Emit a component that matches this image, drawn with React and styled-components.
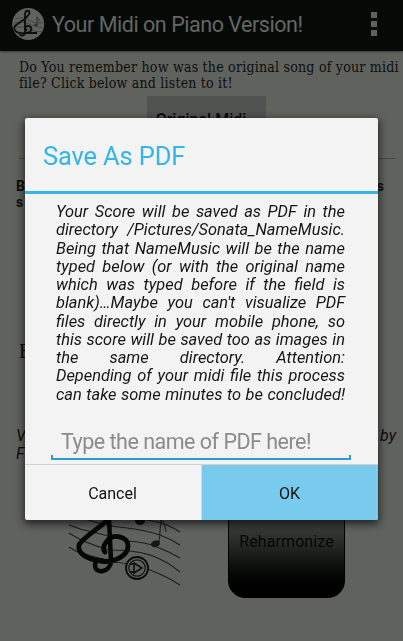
import React from "react";
import styled, { createGlobalStyle } from "styled-components";

const colors = {
	bar: "#060a07",
	page: "#60625e",
	dialog: "#f3f3f3",
	blue: "#33b5e5",
	field: "#2f9dcb",
	pressed: "#78cbec",
};

const GlobalStyle = createGlobalStyle`
	* {
		box-sizing: border-box;
	}

	body {
		margin: 0;
		overflow: hidden;
		font-family: Roboto, sans-serif;
		background: ${colors.page};
	}
`;

const Screen = styled.div`
	width: 403px;
	height: 641px;
	overflow: hidden;
	background: ${colors.page};
`;

const ActionBar = styled.header`
	display: flex;
	align-items: center;
	height: 51px;
	padding: 0 26px 3px 12px;
	background: ${colors.bar};
	box-shadow: 0 1px 2px rgba(0, 0, 0, 0.4);
`;

const BarTitle = styled.h1`
	flex: 1;
	margin: 2px 0 0 7px;
	font-size: 21.5px;
	font-weight: 400;
	line-height: 26px;
	letter-spacing: -0.46px;
	white-space: nowrap;
	color: #646664;
`;

const Overflow = styled.div`
	display: grid;
	gap: 3px;
`;

const Dot = styled.i`
	width: 6px;
	height: 6px;
	background: #60625f;
`;

const Content = styled.main`
	display: flex;
	flex-direction: column;
	color: #0c0e0c;
`;

const Intro = styled.p`
	margin: 8px 0 0 19px;
	width: 384px;
	height: 32px;
	font-family: "DejaVu Serif Condensed", "DejaVu Serif", serif;
	font-stretch: condensed;
	font-size: 14px;
	line-height: 16px;
	white-space: nowrap;
`;

const IntroLine = styled.span`
	display: block;
	letter-spacing: ${({ $spacing }) => $spacing};
`;

const MidiButton = styled.button`
	width: 119px;
	height: 46px;
	margin: 5px 0 0 147px;
	padding: 0;
	border: 0;
	font: 500 16px/48px Roboto, sans-serif;
	letter-spacing: 0;
	text-indent: -11px;
	color: #090b09;
	background: #515350;
`;

const Rule = styled.hr`
	width: 376px;
	height: 1px;
	margin: 16px 0 0 19px;
	border: 0;
	background: #484a47;
`;

const Row = styled.div`
	display: flex;
	justify-content: space-between;
	width: ${({ $width }) => $width};
	margin: ${({ $margin }) => $margin};
`;

const BoldText = styled(Row)`
	font-size: 14px;
	font-weight: 700;
	line-height: 16px;
`;

const SerifText = styled(Row)`
	font-family: "Liberation Serif", serif;
	font-size: 20px;
	line-height: 24px;
`;

const ItalicText = styled(Row)`
	font-size: 16px;
	font-style: italic;
	line-height: 18px;
`;

const Features = styled.section`
	display: flex;
	justify-content: space-between;
	width: 277px;
	margin: 37px 0 0 68px;
`;

const Reharmonize = styled.button`
	width: 117px;
	height: 98px;
	padding: 0 0 14px;
	border: 1px solid #000;
	border-radius: 0 0 17px 17px;
	font: 400 16px/20px Roboto, sans-serif;
	letter-spacing: 0.1px;
	color: #050705;
	background: linear-gradient(#454744 0%, #363836 30%, #060806 75%, #000 90%);
`;

const Dialog = styled.section`
	position: fixed;
	left: 24.5px;
	top: 118px;
	display: flex;
	flex-direction: column;
	width: 353px;
	height: 402px;
	border-radius: 2px;
	overflow: hidden;
	background: ${colors.dialog};
	box-shadow: 0 3px 9px 1px rgba(0, 0, 0, 0.65);
`;

const DialogTitle = styled.h2`
	height: 76px;
	margin: 0;
	padding-left: 18.5px;
	border-bottom: 3px solid ${colors.blue};
	font-size: 25.5px;
	font-weight: 400;
	line-height: 76px;
	letter-spacing: -0.15px;
	color: ${colors.blue};
`;

const Message = styled.div`
	width: 289px;
	margin: 9px 0 0 31.5px;
	font-size: 16.4px;
	font-style: italic;
	line-height: 18.25px;
	color: #161616;
`;

const MessageLine = styled.div`
	text-align: justify;
	text-align-last: justify;
	white-space: nowrap;
`;

const NameField = styled.input`
	width: 300px;
	height: 36px;
	margin: 20px 0 4px 26.5px;
	padding: 4px 0 2px 8px;
	border: solid ${colors.field};
	border-width: 0 2px 2px;
	border-image: linear-gradient(transparent 31px, ${colors.field} 31px) 2;
	outline: 0;
	border-radius: 0;
	font: 400 21.5px/26px Roboto, sans-serif;
	letter-spacing: -0.5px;
	background: transparent;

	&::placeholder {
		color: #8b8b8b;
		opacity: 1;
	}
`;

const Actions = styled.footer`
	display: grid;
	grid-template-columns: 177px 176px;
	height: 56px;
	margin-top: auto;
	border-top: 1px solid #d2d2d2;
`;

const ActionButton = styled.button`
	padding: 3px 0 0;
	border: 0;
	border-right: ${({ $pressed }) => ($pressed ? "0" : "1px solid #d2dde2")};
	font: 400 16px/20px Roboto, sans-serif;
	color: #111;
	background: ${({ $pressed }) => ($pressed ? colors.pressed : "transparent")};
`;

const message = [
	"Your Score will be saved as PDF in the",
	"directory /Pictures/Sonata_NameMusic.",
	"Being that NameMusic will be the name",
	"typed below (or with the original name",
	"which was typed before if the field is",
	"blank)...Maybe you can't visualize PDF",
	"files directly in your mobile phone, so",
	"this score will be saved too as images in",
	"the same directory. Attention:",
	"Depending of your midi file this process",
	"can take some minutes to be concluded!",
];

const Logo = () => (
	<svg width="33" height="34" viewBox="0 0 33 34" fill="none">
		<circle cx="16.2" cy="17" r="16" fill="#60625f" />
		<g stroke="#3d403d" strokeWidth="0.8">
			<path d="M3 12q8-3 14 1t14 3M2 16q9-2 15 1t14 4M2 20q9-1 15 2t13 3" />
		</g>
		<path
			d="M13 19V8c0-6 6-5 4-1-2 5-10 8-14 12-3 5 3 8 10 7 8 0 8-7 3-7-4 0-4 4-1 4M13 17v9c-1 4-6 3-5 0M13 26h12"
			stroke="#0b0e0b"
			strokeWidth="1.8"
		/>
		<path d="M25 18v-8l3 4" stroke="#303330" strokeWidth="1" />
		<ellipse cx="24" cy="18" rx="1.8" ry="1.3" fill="#303330" />
	</svg>
);

const Score = () => (
	<svg width="116" height="98" viewBox="0 0 116 98" fill="none">
		<g stroke="#1b1e1b" strokeWidth="1.1">
			<path d="M1 47Q8 52 16 54T45 62Q62 63 82 70 98 76 112 85" />
			<path d="M1 33Q18 44 42 50 66 50 82 55 99 61 112 72" />
			<path d="M1 25Q13 30 25 32L59 41Q78 42 89 47 102 52 112 58" />
			<path d="M17 19Q38 26 59 28 77 30 92 35 103 39 112 45" />
			<path d="M60 18Q87 20 99 25 106 28 112 32" />
		</g>
		<path
			d="M42 18C33 27 14 38 11 45c-2 9 9 14 21 16 16 2 28-6 28-15 0-10-15-13-21-5-4 5-4 9-2 11"
			stroke="#050705"
			strokeWidth="4.8"
			strokeLinecap="round"
		/>
		<path d="M41 18l2 44c-1 10-16 13-16 3 0-6 10-6 10-1" stroke="#050705" strokeWidth="4.5" />
		<ellipse cx="72" cy="21" rx="5" ry="4" fill="#0b0e0b" />
		<path d="M91 43l2-23q4 3 5 12" stroke="#242724" strokeWidth="1.2" />
		<ellipse cx="87.5" cy="44" rx="4.5" ry="3.2" transform="rotate(-20 87 44)" fill="#141714" />
		<circle cx="69" cy="68" r="11" fill={colors.page} stroke="#080b08" strokeWidth="1.8" />
		<circle cx="69" cy="68" r="8.2" stroke="#111411" strokeWidth="1.2" />
		<path d="M66 63v10l8-5zM62 64.500l4-1M62 71.500l4 1" stroke="#0b0e0b" strokeWidth="1.6" />
	</svg>
);

const App = () => {
	return (
		<Screen>
			<GlobalStyle />
			<ActionBar>
				<Logo />
				<BarTitle>Your Midi on Piano Version!</BarTitle>
				<Overflow>
					<Dot />
					<Dot />
					<Dot />
				</Overflow>
			</ActionBar>
			<Content>
				<Intro>
					<IntroLine $spacing="0.23px">Do You remember how was the original song of your midi</IntroLine>
					<IntroLine $spacing="0.2px">file? Click below and listen to it!</IntroLine>
				</Intro>
				<MidiButton>Original Midi</MidiButton>
				<Rule />
				<BoldText $width="368px" $margin="19px 0 0 16px">
					<span>B</span>
					<span>s</span>
				</BoldText>
				<BoldText $width="368px" $margin="0 0 0 16px">
					<span>s</span>
				</BoldText>
				<SerifText $width="360px" $margin="129px 0 0 19px">
					<span>E</span>
				</SerifText>
				<ItalicText $width="380px" $margin="64px 0 0 16px">
					<span>V</span>
					<span>by</span>
				</ItalicText>
				<ItalicText $width="380px" $margin="0 0 0 16px">
					<span>F</span>
				</ItalicText>
				<Features>
					<Score />
					<Reharmonize>Reharmonize</Reharmonize>
				</Features>
			</Content>
			<Dialog role="dialog">
				<DialogTitle>Save As PDF</DialogTitle>
				<Message>
					{message.map((line) => (
						<MessageLine key={line}>{line.replace("...", "…")}</MessageLine>
					))}
				</Message>
				<NameField placeholder="Type the name of PDF here!" />
				<Actions>
					<ActionButton>Cancel</ActionButton>
					<ActionButton $pressed>OK</ActionButton>
				</Actions>
			</Dialog>
		</Screen>
	);
};

export default App;
